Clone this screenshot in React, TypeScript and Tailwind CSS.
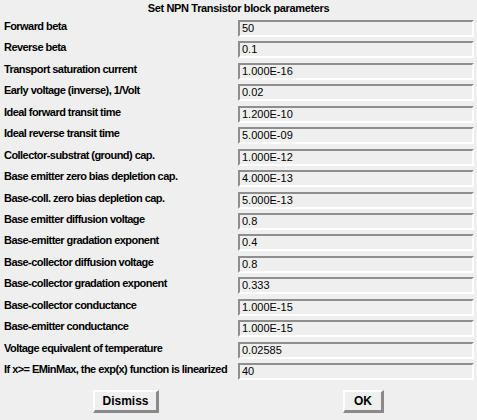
import React from "react";

const rows: [string, string][] = [
  ["Forward beta", "50"],
  ["Reverse beta", "0.1"],
  ["Transport saturation current", "1.000E-16"],
  ["Early voltage (inverse), 1/Volt", "0.02"],
  ["Ideal forward transit time", "1.200E-10"],
  ["Ideal reverse transit time", "5.000E-09"],
  ["Collector-substrat (ground) cap.", "1.000E-12"],
  ["Base emitter zero bias depletion cap.", "4.000E-13"],
  ["Base-coll. zero bias depletion cap.", "5.000E-13"],
  ["Base emitter diffusion voltage", "0.8"],
  ["Base-emitter gradation exponent", "0.4"],
  ["Base-collector diffusion voltage", "0.8"],
  ["Base-collector gradation exponent", "0.333"],
  ["Base-collector conductance", "1.000E-15"],
  ["Base-emitter conductance", "1.000E-15"],
  ["Voltage equivalent of temperature", "0.02585"],
  ["If x>= EMinMax, the exp(x) function is linearized", "40"],
];

export default function App() {
  return (
    <div
      className="w-[477px] h-[420px] bg-[#efefef] text-black overflow-hidden"
      style={{ fontFamily: '"Liberation Sans", Arial, sans-serif' }}
    >
      <div className="h-[18px] pt-[2px] text-center text-[11px] font-bold leading-[13px] tracking-[-0.35px]">
        Set NPN Transistor block parameters
      </div>
      <div className="flex flex-col pl-[4px] pr-[3px]">
        {rows.map(([label, value]) => (
          <div key={label} className="flex items-start h-[21.44px] pt-[2px]">
            <div className="w-[234px] shrink-0 text-[11px] font-bold leading-[13px] whitespace-nowrap tracking-[-0.55px]">
              {label}
            </div>
            <div className="flex-1 h-[17px] border-t-2 border-l-2 border-b-2 border-r-2 border-t-[#8e8e8e] border-l-[#8e8e8e] border-b-white border-r-white bg-[#efefef] pl-[2px] text-[11px] leading-[13px]">
              {value}
            </div>
          </div>
        ))}
      </div>
      <div className="flex mt-[8px]">
        <button className="ml-[93px] w-[66px] h-[23px] bg-[#efefef] border-t-2 border-l-2 border-b-[3px] border-r-[3px] border-t-white border-l-white border-b-[#8a8a8a] border-r-[#8a8a8a] text-[12px] font-bold">
          Dismiss
        </button>
        <button className="ml-[184px] w-[41px] h-[23px] bg-[#efefef] border-t-2 border-l-2 border-b-[3px] border-r-[3px] border-t-white border-l-white border-b-[#8a8a8a] border-r-[#8a8a8a] text-[12px] font-bold">
          OK
        </button>
      </div>
    </div>
  );
}
